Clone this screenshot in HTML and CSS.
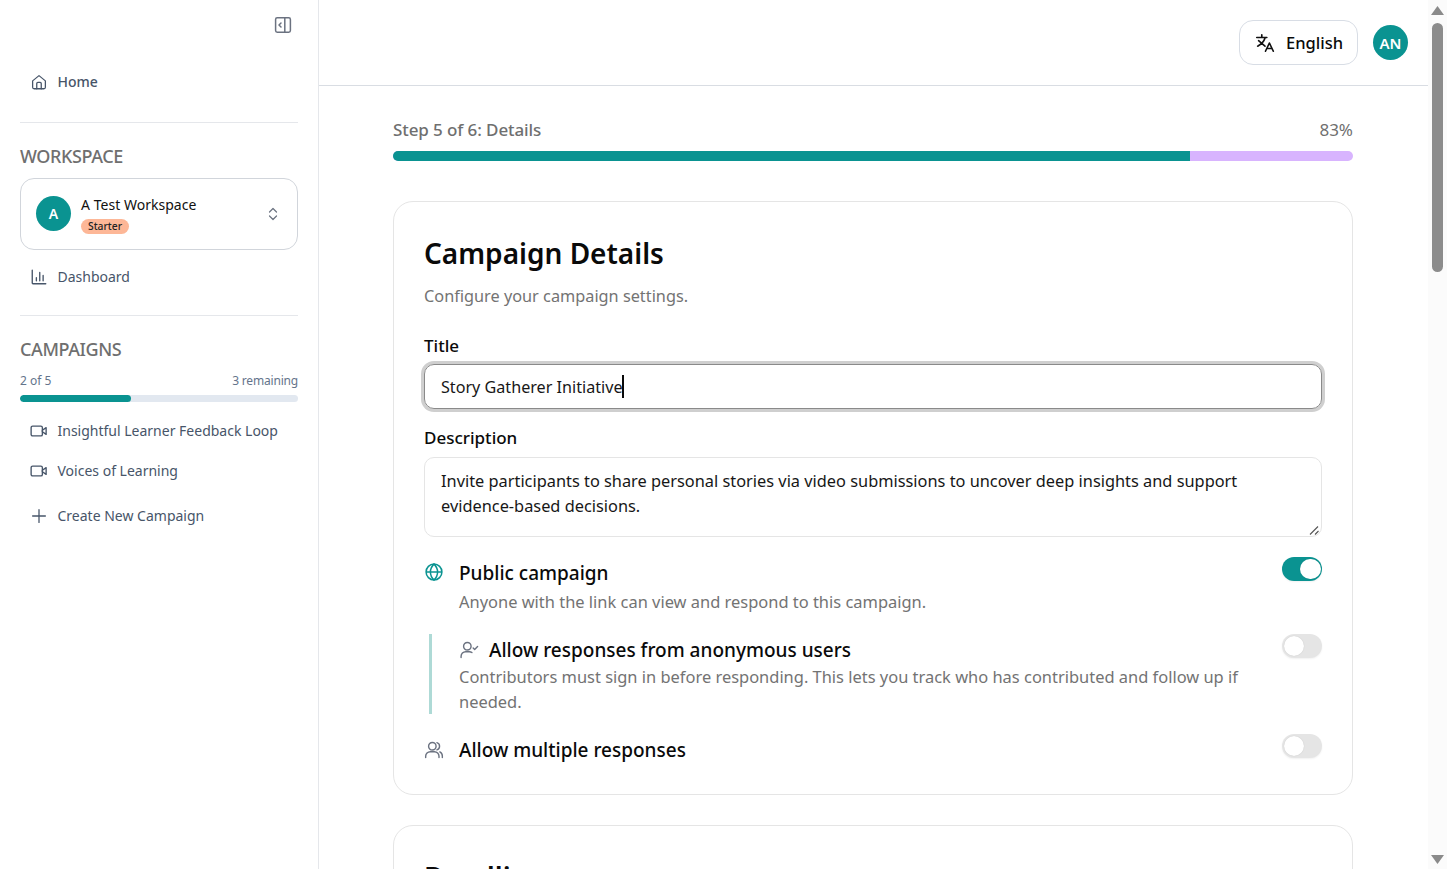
FILE: index.html
```html
<!DOCTYPE html>
<html lang="en">
<head>
<meta charset="utf-8">
<title>Campaign Details</title>
<link rel="stylesheet" href="styles.css">
</head>
<body>
<div class="app">
  <aside class="sidebar">
    <div class="collapse-row">
      <svg class="collapse-icon" width="20" height="20" viewBox="0 0 20 20" fill="none" stroke="#6b7280" stroke-width="1.5"><rect x="2.6" y="2.8" width="14.8" height="14.4" rx="1.6"/><path d="M11.8 3v14M8 8l-2 2 2 2" stroke-linecap="round" stroke-linejoin="round"/></svg>
    </div>
    <a class="nav-item nav-home">
      <svg class="nav-icon" viewBox="0 0 24 24" fill="none" stroke="#475569" stroke-width="1.7" stroke-linecap="round" stroke-linejoin="round"><path d="M3.5 10.5 12 3.5l8.5 7V19a2 2 0 0 1-2 2h-13a2 2 0 0 1-2-2z"/><path d="M9 21v-7a1.5 1.5 0 0 1 1.5-1.5h3A1.5 1.5 0 0 1 15 14v7"/></svg>
      <span>Home</span>
    </a>
    <hr class="divider divider-home">
    <h2 class="section-title">WORKSPACE</h2>
    <div class="workspace">
      <div class="avatar ws-avatar">A</div>
      <div class="ws-text">
        <div class="ws-name">A Test Workspace</div>
        <span class="badge">Starter</span>
      </div>
      <svg class="chevrons" width="16" height="16" viewBox="0 0 16 16" fill="none" stroke="#6b7280" stroke-width="1.2" stroke-linecap="round" stroke-linejoin="round"><path d="M4.5 6 8 2.500 11.500 6M4.500 10 8 13.500 11.500 10"/></svg>
    </div>
    <a class="nav-item nav-dash">
      <svg class="nav-icon" viewBox="0 0 24 24" fill="none" stroke="#475569" stroke-width="1.8" stroke-linecap="round"><path d="M3 3v17a1 1 0 0 0 1 1h17M8.500 17v-4M13 17V6M17.500 17v-7"/></svg>
      <span>Dashboard</span>
    </a>
    <hr class="divider divider-dash">
    <h2 class="section-title">CAMPAIGNS</h2>
    <div class="quota"><span>2 of 5</span><span class="quota-left">3 remaining</span></div>
    <div class="quota-bar"><div class="quota-fill"></div></div>
    <a class="nav-item nav-camp">
      <svg class="nav-icon" viewBox="0 0 24 24" fill="none" stroke="#475569" stroke-width="1.8" stroke-linecap="round" stroke-linejoin="round"><rect x="1.500" y="5.500" width="15" height="13" rx="2"/><path d="m16.500 11 5-3.500v9l-5-3.500z"/></svg>
      <span>Insightful Learner Feedback Loop</span>
    </a>
    <a class="nav-item nav-camp">
      <svg class="nav-icon" viewBox="0 0 24 24" fill="none" stroke="#475569" stroke-width="1.8" stroke-linecap="round" stroke-linejoin="round"><rect x="1.500" y="5.500" width="15" height="13" rx="2"/><path d="m16.500 11 5-3.500v9l-5-3.500z"/></svg>
      <span>Voices of Learning</span>
    </a>
    <a class="nav-item nav-create">
      <svg class="nav-icon" viewBox="0 0 24 24" fill="none" stroke="#475569" stroke-width="1.700" stroke-linecap="round"><path d="M12 3.500v17M3.500 12h17"/></svg>
      <span>Create New Campaign</span>
    </a>
  </aside>

  <div class="main">
    <header class="topbar">
      <button class="lang">
        <svg width="22" height="22" viewBox="0 0 24 24" fill="none" stroke="#111" stroke-width="1.800" stroke-linecap="round" stroke-linejoin="round"><path d="M3 6h11M8.500 3v3M5 9.500l7 6M12 6.500c-1 3.500-3.500 6.500-8 9"/><path d="m12.500 21 4.300-9 4.300 9M14 18h5.600"/></svg>
        <span>English</span>
      </button>
      <div class="avatar user-avatar">AN</div>
    </header>
    <div class="content">
      <div class="step-row"><span class="step-label">Step 5 of 6: Details</span><span class="step-pct">83%</span></div>
      <div class="progress"><div class="progress-fill"></div></div>

      <section class="card">
        <h1 class="card-title">Campaign Details</h1>
        <p class="card-sub">Configure your campaign settings.</p>
        <label class="field-label field-title">Title</label>
        <div class="input"><span>Story Gatherer Initiative</span><i class="caret"></i></div>
        <label class="field-label field-desc">Description</label>
        <div class="textarea">Invite participants to share personal stories via video submissions to uncover deep insights and support evidence-based decisions.
          <svg class="grip" width="12" height="12" viewBox="0 0 12 12" fill="none" stroke="#555" stroke-width="1.100"><path d="M2 10.500 10 2.500M7 10.500l3.500-3.500"/></svg>
        </div>

        <div class="opt opt-public">
          <svg class="opt-icon" viewBox="0 0 24 24" fill="none" stroke="#0a9391" stroke-width="1.800"><circle cx="12" cy="12" r="9.500"/><path d="M2.500 12h19M12 2.500c3 2.800 4.300 6 4.300 9.500s-1.300 6.700-4.300 9.500c-3-2.800-4.300-6-4.300-9.500s1.300-6.700 4.300-9.500z"/></svg>
          <div class="opt-body">
            <div class="opt-title">Public campaign</div>
            <div class="opt-desc">Anyone with the link can view and respond to this campaign.</div>
          </div>
          <div class="toggle on"><i></i></div>
        </div>

        <div class="opt opt-anon">
          <div class="opt-body">
            <div class="opt-head">
              <svg class="opt-icon" viewBox="0 0 24 24" fill="none" stroke="#6b7280" stroke-width="1.700" stroke-linecap="round" stroke-linejoin="round"><circle cx="10" cy="7.500" r="4.500"/><path d="M2.500 21v-1.500a5.500 5.500 0 0 1 5.500-5.500h4.500a5 5 0 0 1 3 1M17 9.500l1.800 1.800 3.500-3.500"/></svg>
              <div class="opt-title">Allow responses from anonymous users</div>
            </div>
            <div class="opt-desc">Contributors must sign in before responding. This lets you track who has contributed and follow up if needed.</div>
          </div>
          <div class="toggle"><i></i></div>
        </div>

        <div class="opt opt-multi">
          <svg class="opt-icon" viewBox="0 0 24 24" fill="none" stroke="#6b7280" stroke-width="1.700" stroke-linecap="round" stroke-linejoin="round"><circle cx="10" cy="7.500" r="4.500"/><path d="M2 21v-1.500A5.500 5.500 0 0 1 7.500 14h5a5.500 5.500 0 0 1 5.500 5.500V21M15.500 3.200a4.500 4.500 0 0 1 0 8.600M19 14.300a5.500 5.500 0 0 1 3 5V21"/></svg>
          <div class="opt-body"><div class="opt-title">Allow multiple responses</div></div>
          <div class="toggle"><i></i></div>
        </div>
      </section>

      <section class="card card-next">
        <h1 class="card-title">Deadlines</h1>
      </section>
    </div>
  </div>

  <div class="scrollbar">
    <svg class="arrow" width="19" height="19" viewBox="0 0 19 19" fill="#8a8a8a"><path d="M9.500 6 16 15H3z"/></svg>
    <div class="track"><div class="thumb"></div></div>
    <svg class="arrow" width="19" height="19" viewBox="0 0 19 19" fill="#8a8a8a"><path d="M9.500 14 3 5h13z"/></svg>
  </div>
</div>
</body>
</html>
```
FILE: styles.css
```css
* { box-sizing: border-box; }
html, body { margin: 0; height: 100%; overflow: hidden; }
body { font-family: "Noto Sans", "Open Sans", sans-serif; color: #0a0a0a; background: #fff; }
.app { display: flex; height: 869px; }

.sidebar { width: 319px; flex: none; padding: 0 20px; border-right: 1px solid #e5e7eb; }
.collapse-row { display: flex; justify-content: flex-end; padding: 15px 5px 0 0; height: 35px; }
.nav-item { display: flex; align-items: center; gap: 9.500px; padding-left: 10px; font-size: 14px; color: #475569; line-height: 20px; }
.nav-icon { width: 18px; height: 18px; flex: none; }
.nav-home { margin-top: 37px; font-weight: 500; }
.divider { border: 0; border-top: 1px solid #e5e7eb; margin: 0; }
.divider-home { margin-top: 30px; }
.section-title { margin: 21px 0 0; font-size: 18px; line-height: 24px; font-weight: 500; color: #6f6f6f; letter-spacing: -0.4px; }
.workspace { margin-top: 10px; height: 72px; border: 1px solid #d1d5db; border-radius: 14px; display: flex; align-items: center; padding: 0 16px 0 15px; }
.avatar { border-radius: 50%; background: #0a9391; color: #fff; display: flex; align-items: center; justify-content: center; font-weight: 600; flex: none; }
.ws-avatar { width: 35px; height: 35px; font-size: 14px; position: relative; top: -1px; }
.ws-text { flex: 1; margin-left: 10px; padding-top: 3px; }
.ws-name { font-size: 14px; line-height: 20px; color: #111; letter-spacing: 0.03px; }
.badge { display: inline-block; background: #fdb797; color: #222; font-size: 10.300px; line-height: 15px; padding: 0 7px; border-radius: 8px; font-weight: 500; vertical-align: top; margin-top: 4px; }
.nav-dash { margin-top: 17px; }
.divider-dash { margin-top: 28px; }
.section-title + .quota { margin-top: 12px; }
.quota { display: flex; justify-content: space-between; font-size: 12px; line-height: 16px; color: #64748b; }
.quota-left { letter-spacing: -0.18px; }
.quota-bar { height: 7px; margin-top: 6px; background: #e2e8f0; border-radius: 4px; overflow: hidden; }
.quota-fill { width: 40%; height: 100%; background: #0a9391; border-radius: 4px; }
.nav-camp { margin-top: 20px; }
.quota-bar + .nav-camp { margin-top: 19px; }
.nav-create { margin-top: 25px; }

.main { width: 1109px; flex: none; display: flex; flex-direction: column; overflow: hidden; }
.topbar { height: 86px; flex: none; border-bottom: 1px solid #d9dde3; display: flex; justify-content: flex-end; align-items: center; gap: 15px; padding: 0 20px 0 0; }
.lang { font-family: inherit; display: flex; align-items: center; gap: 10px; height: 45px; width: 119px; justify-content: center; background: #fff; border: 1px solid #d8dde5; border-radius: 14px; font-size: 16.500px; font-weight: 500; color: #0a0a0a; padding: 0; }
.user-avatar { width: 35px; height: 35px; font-size: 15px; }

.content { width: 960px; margin-left: 74px; flex: none; }
.step-row { display: flex; justify-content: space-between; margin-top: 31px; font-size: 17px; line-height: 26px; color: #6f6f6f; }
.step-label { font-weight: 500; letter-spacing: -0.1px; }
.progress { height: 10px; margin-top: 8px; background: #d8b4fe; border-radius: 5px; overflow: hidden; }
.progress-fill { width: 83%; height: 100%; background: #0a9391; }

.card { margin-top: 40px; height: 594px; border: 1px solid #e5e5e5; border-radius: 20px; padding: 30px; }
.card-title { margin: 0; font-size: 28px; line-height: 42px; font-weight: 600; color: #0a0a0a; }
.card-sub { margin: 10px 0 0; font-size: 16.300px; line-height: 24px; color: #737373; }
.field-label { display: block; font-size: 17px; line-height: 24px; font-weight: 500; }
.field-title { margin-top: 26px; }
.field-desc { margin-top: 17px; }
.input { margin-top: 6px; height: 45px; border: 1px solid #8a8a8a; border-radius: 10px; box-shadow: 0 0 0 3px #cfcfcf; padding: 0 16px; display: flex; align-items: center; font-size: 16.150px; color: #171717; }
.caret { width: 2px; height: 23px; background: #0a0a0a; margin-left: -1px; }
.textarea { position: relative; margin-top: 7px; height: 80px; border: 1px solid #e5e5e5; border-radius: 10px; padding: 11px 16px; font-size: 16.350px; line-height: 25px; color: #171717; }
.grip { position: absolute; right: 1px; bottom: 0; }

.opt { display: flex; }
.opt-icon { width: 20px; height: 20px; flex: none; }
.opt-body { flex: 1; min-width: 0; }
.opt-title { font-size: 19px; line-height: 28px; font-weight: 500; color: #0a0a0a; }
.opt-desc { font-size: 16.450px; line-height: 25px; color: #737373; }
.opt-public { margin-top: 22px; gap: 15px; height: 58px; }
.opt-public .opt-icon { margin-top: 3px; }
.opt-public .opt-desc { margin-top: 2px; }
.opt-anon { margin: 17px 0 0 5px; height: 80px; border-left: 3px solid #aedad6; padding-left: 27px; }
.opt-anon .opt-body { width: 790px; flex: none; margin-right: auto; padding-top: 2px; }
.opt-head { display: flex; align-items: center; gap: 10px; }
.opt-multi { margin-top: 22px; gap: 15px; }
.opt-multi .opt-icon { margin-top: 4px; }

.toggle { width: 40px; height: 23.500px; flex: none; border-radius: 12px; background: #e5e5e5; padding: 1.500px; box-shadow: 0 1px 2px rgba(0,0,0,.06); }
.toggle i { display: block; width: 20.500px; height: 20.500px; border-radius: 50%; background: #fff; box-shadow: 0 0 1px rgba(0,0,0,.2); }
.toggle.on { background: #0a9391; }
.toggle.on i { margin-left: 16.500px; }
.opt-multi .toggle { margin-top: -2px; }
.opt-public .toggle { margin-top: -2px; }

.card-next { margin-top: 30px; height: 200px; }

.scrollbar { width: 19px; flex: none; display: flex; flex-direction: column; align-items: center; background: #fbfbfb; height: 869px; }
.arrow { flex: none; }
.track { flex: 1; width: 100%; padding-top: 4px; }
.thumb { height: 249px; width: 11px; margin: 0 auto; background: #8c8c8c; border-radius: 6px; }
```
